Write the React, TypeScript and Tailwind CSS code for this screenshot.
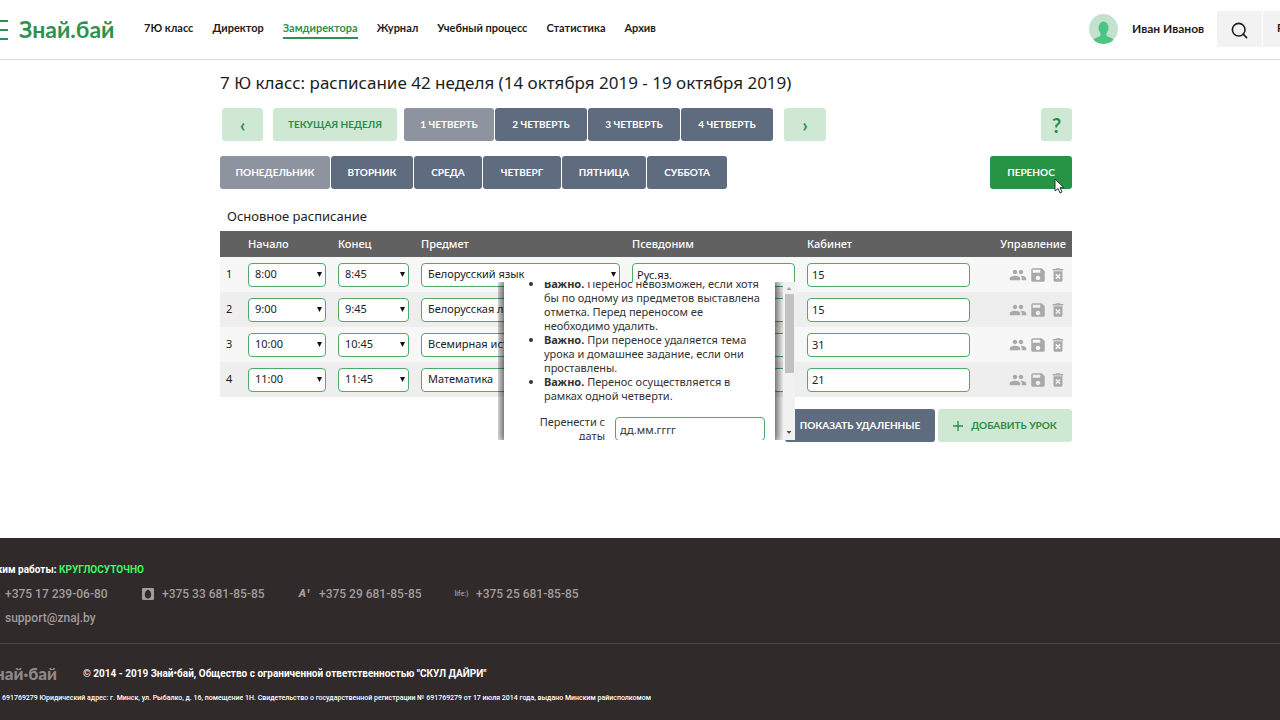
import { FiSearch } from "react-icons/fi";
import { MdDeleteForever, MdPeople, MdSave } from "react-icons/md";

const NAV = [
  "7Ю класс",
  "Директор",
  "Замдиректора",
  "Журнал",
  "Учебный процесс",
  "Статистика",
  "Архив",
];

const QUARTERS = ["1 четверть", "2 четверть", "3 четверть", "4 четверть"];

const DAYS = [
  { name: "Понедельник", width: "w-[110px]" },
  { name: "Вторник", width: "w-[82px]" },
  { name: "Среда", width: "w-[68px]" },
  { name: "Четверг", width: "w-[78px]" },
  { name: "Пятница", width: "w-[84px]" },
  { name: "Суббота", width: "w-[80px]" },
];

const LESSONS = [
  { start: "8:00", end: "8:45", subject: "Белорусский язык", alias: "Рус.яз.", room: "15" },
  { start: "9:00", end: "9:45", subject: "Белорусская литература", alias: "", room: "15" },
  { start: "10:00", end: "10:45", subject: "Всемирная история", alias: "", room: "31" },
  { start: "11:00", end: "11:45", subject: "Математика", alias: "", room: "21" },
];

const PHONES = [
  { icon: <VelcomIcon />, number: "+375 33 681-85-85" },
  { icon: <span className="text-[11px] font-black italic">A¹</span>, number: "+375 29 681-85-85" },
  { icon: <span className="text-[7px]">life:)</span>, number: "+375 25 681-85-85" },
];

const BTN =
  "h-[33px] shrink-0 rounded-[3px] font-['Lato',sans-serif] text-[10px] font-bold uppercase whitespace-nowrap";
const SLATE = "bg-[#5f6b7f] text-white";
const MUTED = "bg-[#8e93a0] text-white";
const MINT = "bg-[#cfe8d4] text-[#2a8c46]";
const FIELD =
  "block h-6 w-full rounded-[4px] border border-[#4faa68] bg-white text-[11px] text-[#222]";

function VelcomIcon() {
  return (
    <svg width="12" height="12" viewBox="0 0 12 12" fill="#a19d9d">
      <path
        fillRule="evenodd"
        d="M1 0h10a1 1 0 0 1 1 1v10a1 1 0 0 1-1 1H1a1 1 0 0 1-1-1V1a1 1 0 0 1 1-1zm5 1.500C4 2.500 2.800 4.300 2.800 6.500 2.800 8.900 4.100 10.500 6 10.500s3.200-1.600 3.200-4C9.200 4.300 8 2.500 6 1.500z"
      />
    </svg>
  );
}

function Avatar() {
  return (
    <svg width="29" height="30" viewBox="0 0 29 30">
      <defs>
        <clipPath id="face">
          <ellipse cx="14.500" cy="15" rx="14.500" ry="15" />
        </clipPath>
      </defs>
      <g clipPath="url(#face)">
        <rect width="29" height="30" fill="#c3e2cd" />
        <ellipse cx="14.500" cy="14" rx="5" ry="6.500" fill="#4cc584" />
        <path d="M11.500 18h6v4l5 2c2 1 3 3 3 6h-22c0-3 1-5 3-6l5-2z" fill="#4cc584" />
      </g>
    </svg>
  );
}

function Cursor() {
  return (
    <svg className="absolute top-[22px] left-[64px]" width="11" height="16" viewBox="0 0 11 16">
      <path
        d="M1 1v12l3-2.500 2 4.500 2-1-2-4.300h4z"
        fill="#fff"
        stroke="#333"
        strokeWidth="1"
      />
    </svg>
  );
}

function Select({ label, value }: { label: string; value: string }) {
  return (
    <div className="relative">
      <select aria-label={label} defaultValue={value} className={`${FIELD} appearance-none px-1.5`}>
        <option>{value}</option>
      </select>
      <svg
        className="pointer-events-none absolute top-[9px] right-1"
        width="5"
        height="5"
        viewBox="0 0 5 5"
      >
        <path d="M0 0h5L2.500 5z" fill="#111" />
      </svg>
    </div>
  );
}

function Header() {
  return (
    <header className="flex h-[60px] items-center overflow-hidden border-b border-[#dcdcdc] font-['Lato',sans-serif] text-[11px] font-bold text-[#1d1d1d]">
      <button aria-label="Меню" className="-ml-3 flex w-5 shrink-0 flex-col gap-[7px]">
        <span className="h-0.5 bg-[#2f9150]" />
        <span className="h-0.5 bg-[#2f9150]" />
        <span className="h-0.5 bg-[#2f9150]" />
      </button>
      <a
        href="#"
        className="ml-[11px] w-[97px] shrink-0 pb-0.5 text-[23px] leading-7 text-[#2f9150]"
      >
        Знай.бай
      </a>
      <nav className="ml-7 flex shrink-0 gap-[19px]">
        {NAV.map((item) => (
          <a
            key={item}
            href="#"
            className={
              item === "Замдиректора"
                ? "border-b-2 border-[#2f9150] text-[#2f9150]"
                : "border-b-2 border-transparent"
            }
          >
            {item}
          </a>
        ))}
      </nav>
      <div className="ml-auto flex shrink-0 items-center pb-0.5">
        <Avatar />
        <span className="ml-[14px] w-[71px] text-xs whitespace-nowrap">Иван Иванов</span>
        <button
          aria-label="Поиск"
          className="ml-[14px] flex h-9 w-[45px] items-center justify-center bg-[#f2f2f2]"
        >
          <FiSearch size={19} className="mt-1" />
        </button>
        <button className="-mr-8 ml-px h-9 w-[49px] bg-[#f2f2f2] pl-[14px] text-left">РУС</button>
      </div>
    </header>
  );
}

function Schedule() {
  return (
    <table className="w-full table-fixed text-left text-[11px]">
      <colgroup>
        <col className="w-[22px]" />
        <col className="w-[90px]" />
        <col className="w-[83px]" />
        <col />
        <col className="w-[175px]" />
        <col className="w-[175px]" />
        <col className="w-[96px]" />
      </colgroup>
      <thead className="bg-[#616161] text-white">
        <tr className="h-[26px]">
          <th />
          <th className="px-1.5 font-medium">Начало</th>
          <th className="px-1.5 font-medium">Конец</th>
          <th className="px-1.5 font-medium">Предмет</th>
          <th className="px-1.5 font-medium">Псевдоним</th>
          <th className="px-1.5 font-medium">Кабинет</th>
          <th className="px-1.5 text-right font-medium">Управление</th>
        </tr>
      </thead>
      <tbody>
        {LESSONS.map((lesson, i) => (
          <tr key={lesson.start} className="h-[35px] odd:bg-[#f7f7f7] even:bg-[#eeeeee]">
            <td className="pl-1.5">{i + 1}</td>
            <td className="px-1.5">
              <Select label="Начало" value={lesson.start} />
            </td>
            <td className="px-1.5">
              <Select label="Конец" value={lesson.end} />
            </td>
            <td className="px-1.5">
              <Select label="Предмет" value={lesson.subject} />
            </td>
            <td className="px-1.5">
              <input aria-label="Псевдоним" defaultValue={lesson.alias} className={`${FIELD} px-1`} />
            </td>
            <td className="px-1.5">
              <input aria-label="Кабинет" defaultValue={lesson.room} className={`${FIELD} px-1`} />
            </td>
            <td className="px-[5px]">
              <div className="flex justify-end gap-0.5 text-[#a9a9a9]">
                <button aria-label="Группы">
                  <MdPeople size={18} />
                </button>
                <button aria-label="Сохранить">
                  <MdSave size={18} />
                </button>
                <button aria-label="Удалить">
                  <MdDeleteForever size={18} />
                </button>
              </div>
            </td>
          </tr>
        ))}
      </tbody>
    </table>
  );
}

function TransferPopup() {
  return (
    <div className="absolute top-[51px] left-[278px] flex h-[158px] w-[297px] overflow-hidden">
      <div className="mx-1.5 h-full w-[271px] shrink-0 bg-white text-[11px] leading-[14px] text-[#333] shadow-[0_0_9px_3px_rgba(0,0,0,0.7)]">
        <div className="h-full overflow-hidden">
          <ul className="-mt-[5px] list-disc pl-10 whitespace-nowrap">
            <li>
              <b>Важно.</b> Перенос невозможен, если хотя
              <br />
              бы по одному из предметов выставлена
              <br />
              отметка. Перед переносом ее
              <br />
              необходимо удалить.
            </li>
            <li>
              <b>Важно.</b> При переносе удаляется тема
              <br />
              урока и домашнее задание, если они
              <br />
              проставлены.
            </li>
            <li>
              <b>Важно.</b> Перенос осуществляется в
              <br />
              рамках одной четверти.
            </li>
          </ul>
          <div className="mt-3 flex gap-[10px]">
            <label htmlFor="from" className="w-[101px] text-right">
              Перенести с
              <br />
              даты
            </label>
            <input
              id="from"
              defaultValue="дд.мм.гггг"
              className="mt-0.5 h-6 w-[150px] rounded-[4px] border border-[#4faa68] px-1"
            />
          </div>
        </div>
      </div>
      <div className="relative ml-0.5 flex w-3 shrink-0 flex-col items-center bg-[#f1f1f1]">
        <svg width="12" height="12" viewBox="0 0 12 12">
          <path d="M3.500 8h5L6 5z" fill="#a3a3a3" />
        </svg>
        <div className="h-[79px] w-[9px] bg-[#c1c1c1]" />
        <svg className="mt-auto" width="12" height="14" viewBox="0 0 12 14">
          <path d="M3.500 5h5L6 8z" fill="#505050" />
        </svg>
      </div>
    </div>
  );
}

function Footer() {
  return (
    <footer className="mt-24 grow overflow-hidden bg-[#302a2a] font-['Roboto',sans-serif] font-bold whitespace-nowrap text-white">
      <div className="border-b border-[#4b4646] pt-6 pb-[17px]">
        <p className="-ml-[18px] text-[10px] leading-4">
          Режим работы: <span className="text-[#3dfa5c]">КРУГЛОСУТОЧНО</span>
        </p>
        <div className="mt-2 flex pl-[5px] text-xs leading-4 font-medium text-[#a19d9d]">
          <a href="tel:+375172390680" className="w-[136px]">
            +375 17 239-06-80
          </a>
          {PHONES.map((phone) => (
            <a
              key={phone.number}
              href={`tel:${phone.number}`}
              className="flex w-[157px] items-center gap-2"
            >
              <span className="flex w-[13px] justify-center">{phone.icon}</span>
              {phone.number}
            </a>
          ))}
        </div>
        <a
          href="mailto:support@znaj.by"
          className="mt-2 block pl-[5px] text-xs leading-4 font-medium text-[#a19d9d]"
        >
          support@znaj.by
        </a>
      </div>
      <div className="flex items-center gap-[26px] pt-5 text-[10px] leading-5">
        <div className="flex w-[57px] justify-end font-['Lato',sans-serif] text-[17px] leading-5 font-black text-[#8d8989]">
          Знай·бай
        </div>
        <p>© 2014 - 2019 Знай•бай, Общество с ограниченной ответственностью "СКУЛ ДАЙРИ"</p>
      </div>
      <p className="mt-2 pb-4 pl-0.5 text-[7px] leading-3 font-medium">
        691769279 Юридический адрес: г. Минск, ул. Рыбалко, д. 16, помещение 1Н. Свидетельство о
        государственной регистрации № 691769279 от 17 июля 2014 года, выдано Минским
        райисполкомом
      </p>
    </footer>
  );
}

export default function App() {
  return (
    <div className="flex min-h-screen flex-col overflow-x-hidden bg-white font-['Noto_Sans',sans-serif] text-[#1d1d1d]">
      <Header />
      <main className="pl-3">
        <div className="mx-auto max-w-[852px]">
          <h1 className="pt-2.5 text-[17px] leading-[26px]">
            7 Ю класс: расписание 42 неделя (14 октября 2019 - 19 октября 2019)
          </h1>

          <div className="mt-3 flex pl-0.5">
            <button aria-label="Назад" className={`${BTN} ${MINT} w-[41px]`}>
              <span className="text-lg">‹</span>
            </button>
            <button className={`${BTN} ${MINT} ml-[10px] w-[124px]`}>Текущая неделя</button>
            <div className="ml-[7px] flex gap-px">
              {QUARTERS.map((name, i) => (
                <button
                  key={name}
                  className={`${BTN} ${i === 0 ? `${MUTED} w-[90px]` : `${SLATE} w-[92px]`}`}
                >
                  {name}
                </button>
              ))}
            </div>
            <button aria-label="Вперёд" className={`${BTN} ${MINT} ml-[11px] w-[42px]`}>
              <span className="text-lg">›</span>
            </button>
            <button aria-label="Помощь" className={`${BTN} ${MINT} ml-auto w-[31px]`}>
              <span className="text-xl">?</span>
            </button>
          </div>

          <div className="mt-[15px] flex gap-px">
            {DAYS.map((day, i) => (
              <button key={day.name} className={`${BTN} ${i === 0 ? MUTED : SLATE} ${day.width}`}>
                {day.name}
              </button>
            ))}
            <button className={`${BTN} relative ml-auto w-[82px] bg-[#279445] text-white`}>
              Перенос
              <Cursor />
            </button>
          </div>

          <h2 className="mt-[17px] mb-[5px] pl-[7px] text-[13px] leading-5">
            Основное расписание
          </h2>

          <div className="relative">
            <Schedule />
            <div className="mt-3 flex justify-end gap-[3px]">
              <button className={`${BTN} ${SLATE} w-[150px]`}>Показать удаленные</button>
              <button
                className={`${BTN} ${MINT} flex w-[134px] items-center justify-center gap-2`}
              >
                <svg width="10" height="10" viewBox="0 0 10 10" stroke="#2a8c46" strokeWidth="1.300">
                  <path d="M5 0v10M0 5h10" />
                </svg>
                Добавить урок
              </button>
            </div>
            <TransferPopup />
          </div>
        </div>
      </main>
      <Footer />
    </div>
  );
}
